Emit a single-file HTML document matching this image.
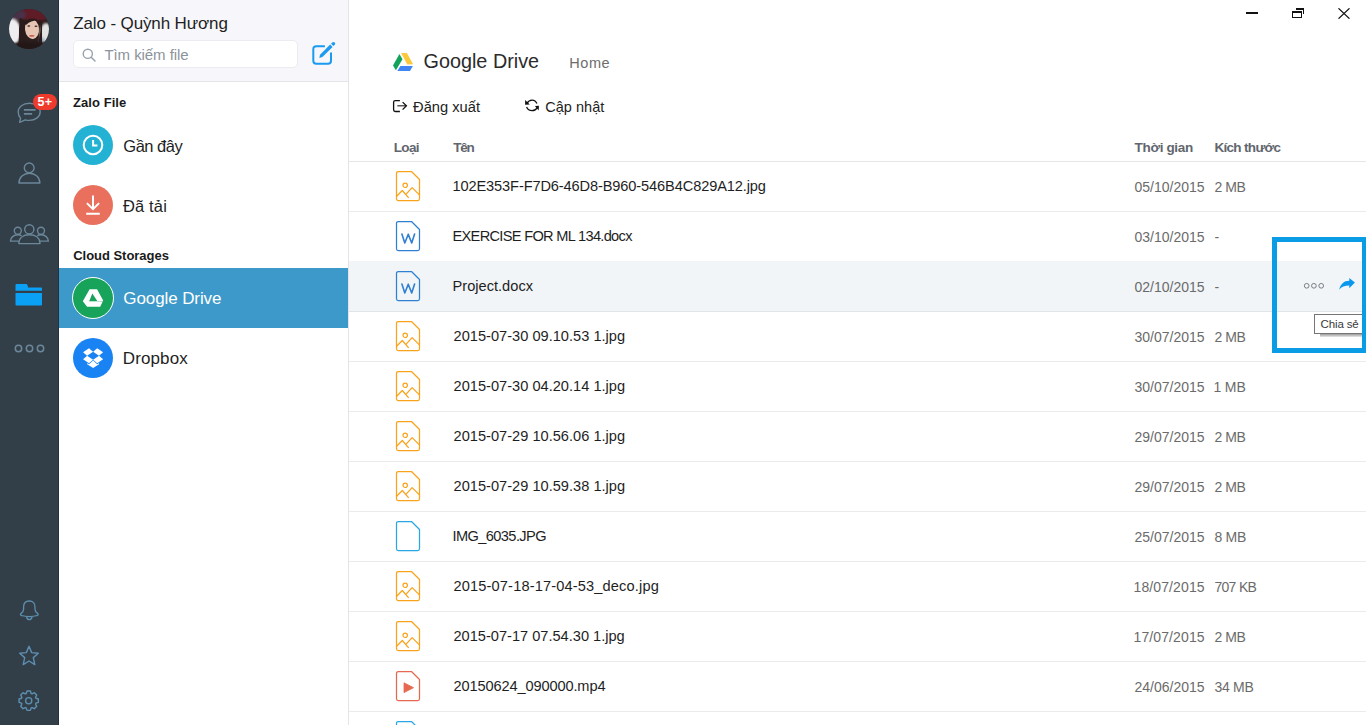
<!DOCTYPE html>
<html><head><meta charset="utf-8">
<style>
*{margin:0;padding:0;box-sizing:border-box}
html,body{width:1366px;height:725px;overflow:hidden;background:#fff}
body{position:relative;font-family:"Liberation Sans",sans-serif;color:#1e1e1e}
.a{position:absolute}
.t{position:absolute;white-space:nowrap;line-height:1}
svg{display:block}
</style></head>
<body>

<div class="a" style="left:0;top:0;width:59px;height:725px;background:#323f48"></div>
<div class="a" style="left:58px;top:0;width:1px;height:725px;background:#23313b"></div>
<svg class="a" style="left:9px;top:9px" width="40" height="40" viewBox="0 0 40 40">
<defs><clipPath id="avc"><circle cx="20" cy="20" r="20"/></clipPath>
<filter id="avb" x="-20%" y="-20%" width="140%" height="140%"><feGaussianBlur stdDeviation="1.1"/></filter>
<filter id="avb2" x="-20%" y="-20%" width="140%" height="140%"><feGaussianBlur stdDeviation="0.6"/></filter></defs>
<g clip-path="url(#avc)">
<rect x="0" y="0" width="40" height="40" fill="#2b1d1d"/>
<g filter="url(#avb)">
<ellipse cx="26" cy="3" rx="20" ry="9" fill="#5e1f26"/>
<ellipse cx="8" cy="6" rx="9" ry="5" fill="#4a3148"/>
<ellipse cx="3" cy="23" rx="9" ry="13" fill="#eeedf0"/>
<ellipse cx="37" cy="24" rx="6" ry="10" fill="#e2e3e0"/>
<ellipse cx="33" cy="31" rx="2.5" ry="2.5" fill="#9ab0c6"/>
</g>
<g filter="url(#avb2)">
<path d="M11 9 C14 10 17 14 17 22 C17 28 16 34 14 40 L9 40 C10 32 10 26 10 20 Z" fill="#2a1b1a"/>
<ellipse cx="23" cy="20" rx="7" ry="10" fill="#e7c5b4" transform="rotate(-6 23 20)"/>
<path d="M15 14 C18 9 25 8 31 12 C28 11 22 11 17 16 Z" fill="#2a1b1a"/>
<ellipse cx="19.8" cy="17" rx="1.5" ry="0.7" fill="#3a2624"/>
<ellipse cx="27" cy="17.3" rx="1.5" ry="0.7" fill="#3a2624"/>
<ellipse cx="22.8" cy="26.8" rx="2.8" ry="0.9" fill="#c2574f"/>
<path d="M30 11 C32 15 32 22 30 30 L30 40 L33 40 L33 12 Z" fill="#2e1f1e"/>
</g>
<rect x="0" y="34" width="40" height="6" fill="#231716" opacity="0.85" filter="url(#avb)"/>
</g>
</svg>
<svg class="a" style="left:16px;top:101px" width="28" height="24" viewBox="0 0 28 24">
<path d="M13.4 2.2 C19.6 2.2 24.2 6 24.2 10.8 C24.2 15.6 19.6 19.4 13.4 19.4 C11.9 19.4 10.5 19.2 9.3 18.8 L3.6 21.3 L4.6 17.2 C2.9 15.6 2.2 13.4 2.2 10.8 C2.2 6 7 2.2 13.4 2.2 Z" fill="none" stroke="#6b8799" stroke-width="1.4" stroke-linejoin="round"/>
<path d="M7.9 8.9 H19.6 M7.9 12.9 H16.1" stroke="#6b8799" stroke-width="1.9"/>
</svg>
<div class="a" style="left:33px;top:94px;width:24px;height:16px;border-radius:8px;background:#ef3b2d;color:#fff;font-size:12.5px;font-weight:700;line-height:17px;text-align:center;letter-spacing:0.3px">5+</div>
<svg class="a" style="left:16px;top:161px" width="28" height="26" viewBox="0 0 28 26">
<circle cx="13.2" cy="6.9" r="4.9" fill="none" stroke="#6b8799" stroke-width="1.4"/>
<path d="M2.9 22 C2.9 16.3 7.6 12.2 13.4 12.2 C19.2 12.2 23.9 16.3 23.9 22 Z" fill="none" stroke="#6b8799" stroke-width="1.4" stroke-linejoin="round"/>
</svg>
<svg class="a" style="left:8px;top:222px" width="44" height="25" viewBox="0 0 44 25">
<circle cx="9.8" cy="8.8" r="3.5" fill="none" stroke="#6b8799" stroke-width="1.4"/>
<circle cx="33" cy="8.8" r="3.5" fill="none" stroke="#6b8799" stroke-width="1.4"/>
<circle cx="21.3" cy="7.3" r="4.6" fill="none" stroke="#6b8799" stroke-width="1.4"/>
<path d="M13.6 13.6 C12.5 13 11.2 12.8 9.8 12.8 C5.6 12.8 2.5 15.5 2.5 19.1 H10.8" fill="none" stroke="#6b8799" stroke-width="1.4"/>
<path d="M29.2 13.6 C30.3 13 31.6 12.8 33 12.8 C37.2 12.8 40.3 15.5 40.3 19.1 H32" fill="none" stroke="#6b8799" stroke-width="1.4"/>
<path d="M10.8 21.6 C10.8 16 15.2 12.8 21.4 12.8 C27.6 12.8 32 16 32 21.6 Z" fill="none" stroke="#6b8799" stroke-width="1.4" stroke-linejoin="round"/>
</svg>
<svg class="a" style="left:15px;top:283px" width="28" height="24" viewBox="0 0 28 24">
<path d="M0.5 2.3 C0.5 1.6 1 1.1 1.7 1.1 H11.8 L13 3.6 V4.4 H25.8 C26.5 4.4 27 4.9 27 5.6 V7.7 H0.5 Z" fill="#0aa0f5"/>
<path d="M0.5 9.9 H27 V21.4 C27 22.1 26.5 22.6 25.8 22.6 H1.7 C1 22.6 0.5 22.1 0.5 21.4 Z" fill="#0aa0f5"/>
</svg>
<svg class="a" style="left:12px;top:342px" width="36" height="12" viewBox="0 0 36 12">
<circle cx="6.5" cy="6.5" r="3.2" fill="none" stroke="#6b8799" stroke-width="1.5"/>
<circle cx="17.5" cy="6.5" r="3.2" fill="none" stroke="#6b8799" stroke-width="1.5"/>
<circle cx="28.5" cy="6.5" r="3.2" fill="none" stroke="#6b8799" stroke-width="1.5"/>
</svg>
<svg class="a" style="left:18px;top:599px" width="24" height="24" viewBox="0 0 24 24">
<path d="M11.3 2 C7.6 2 5.6 4.5 5.6 8 V10.3 C5.6 12.3 4.6 13.4 3.1 14.4 C2 15.2 2.3 16.2 3.5 16.5 C6 17.3 8.5 17.6 11.3 17.6 C14.1 17.6 16.6 17.3 19.1 16.5 C20.3 16.2 20.6 15.2 19.5 14.4 C18 13.4 17 12.3 17 10.3 V8 C17 4.5 15 2 11.3 2 Z" fill="none" stroke="#5d8fb0" stroke-width="1.3" stroke-linejoin="round"/>
<path d="M8.5 18 C8.9 19.7 9.9 20.6 11.3 20.6 C12.7 20.6 13.7 19.7 14.1 18" fill="none" stroke="#5d8fb0" stroke-width="1.3"/>
</svg>
<svg class="a" style="left:17px;top:644px" width="24" height="24" viewBox="0 0 24 24">
<path d="M12 2.3 L14.7 8.6 L21.3 9.2 L16.3 13.6 L17.8 20.6 L12 17 L6.2 20.6 L7.7 13.6 L2.7 9.2 L9.3 8.6 Z" fill="none" stroke="#5d8fb0" stroke-width="1.4" stroke-linejoin="round"/>
</svg>
<svg class="a" style="left:17px;top:688px" width="24" height="24" viewBox="0 0 24 24">
<path d="M9.24 5.51 L10.04 3.04 L13.36 3.04 L14.16 5.51 L15.04 5.87 L17.36 4.70 L19.70 7.04 L18.53 9.36 L18.89 10.24 L21.36 11.04 L21.36 14.36 L18.89 15.16 L18.53 16.04 L19.70 18.36 L17.36 20.70 L15.04 19.53 L14.16 19.89 L13.36 22.36 L10.04 22.36 L9.24 19.89 L8.36 19.53 L6.04 20.70 L3.70 18.36 L4.87 16.04 L4.51 15.16 L2.04 14.36 L2.04 11.04 L4.51 10.24 L4.87 9.36 L3.70 7.04 L6.04 4.70 L8.36 5.87 Z" fill="none" stroke="#5d8fb0" stroke-width="1.4" stroke-linejoin="round"/>
<circle cx="11.7" cy="12.7" r="3.1" fill="none" stroke="#5d8fb0" stroke-width="1.3"/>
</svg>
<div class="a" style="left:59px;top:0;width:289px;height:81px;background:#f7f7fb"></div>
<div class="a" style="left:59px;top:81px;width:289px;height:1px;background:#e3e3e8"></div>
<div class="a" style="left:348px;top:0;width:1px;height:725px;background:#e5e3ea"></div>
<div class="t" style="left:73.20px;top:14.55px;font-size:17px;font-weight:400;color:#1f1f1f;letter-spacing:-0.120px;">Zalo - Quỳnh Hương</div>
<div class="a" style="left:73px;top:40px;width:225px;height:28px;background:#fff;border:1px solid #ececf0;border-radius:5px"></div>
<svg class="a" style="left:82px;top:48px" width="14" height="14" viewBox="0 0 14 14">
<circle cx="5.8" cy="5.8" r="4.6" fill="none" stroke="#9aa3ad" stroke-width="1.4"/>
<path d="M9.2 9.2 L13 13" stroke="#9aa3ad" stroke-width="1.5" stroke-linecap="round"/>
</svg>
<div class="t" style="left:104.40px;top:47.25px;font-size:15px;font-weight:400;color:#8b939c;letter-spacing:-0.064px;">Tìm kiếm file</div>
<svg class="a" style="left:310px;top:41px" width="26" height="26" viewBox="0 0 26 26">
<path d="M14.9 5.2 H6.3 C4.3 5.2 3.3 6.2 3.3 8.2 V19.7 C3.3 21.7 4.3 22.7 6.3 22.7 H18 C20 22.7 21 21.7 21 19.7 V11.4" fill="none" stroke="#1a9af0" stroke-width="2"/>
<path d="M9.4 16.9 L10 13.7 L20.2 3.5 L22.6 5.9 L12.4 16.1 Z" fill="#1a9af0"/>
<path d="M21 2.7 L22.3 1.4 C23 0.7 24 0.7 24.7 1.4 C25.4 2.1 25.4 3.1 24.7 3.8 L23.4 5.1 Z" fill="#1a9af0"/>
</svg>
<div class="t" style="left:73.10px;top:95.55px;font-size:13px;font-weight:700;color:#1a1a1a;letter-spacing:0.050px;">Zalo File</div>
<div class="a" style="left:73px;top:125px;width:40px;height:40px;border-radius:50%;background:#24b2d4"></div>
<svg class="a" style="left:73px;top:125px" width="40" height="40" viewBox="0 0 40 40">
<circle cx="20" cy="20" r="9.3" fill="none" stroke="#fff" stroke-width="2"/>
<path d="M20.1 14.9 V20.5 H24.4" fill="none" stroke="#fff" stroke-width="2"/>
</svg>
<div class="t" style="left:123.30px;top:137.57px;font-size:16.5px;font-weight:400;color:#1f1f1f;letter-spacing:-0.487px;">Gần đây</div>
<div class="a" style="left:73px;top:185px;width:40px;height:40px;border-radius:50%;background:#e8705c"></div>
<svg class="a" style="left:73px;top:185px" width="40" height="40" viewBox="0 0 40 40">
<path d="M20 10.5 V23.6 M13.9 18.1 L20 24.2 L26.1 18.1 M13.2 28.8 H26.8" fill="none" stroke="#fff" stroke-width="2"/>
</svg>
<div class="t" style="left:122.90px;top:197.97px;font-size:16.5px;font-weight:400;color:#1f1f1f;letter-spacing:0.173px;">Đã tải</div>
<div class="t" style="left:73.20px;top:248.95px;font-size:13px;font-weight:700;color:#1a1a1a;letter-spacing:-0.026px;">Cloud Storages</div>
<div class="a" style="left:59px;top:268px;width:289px;height:60px;background:#3d99c9"></div>
<div class="a" style="left:72px;top:277px;width:42px;height:42px;border-radius:50%;background:#17a35a;border:1.5px solid #fff"></div>
<svg class="a" style="left:72px;top:277px" width="42" height="42" viewBox="0 0 42 42">
<path d="M17.6 12.15 H25.06 L31.19 23.57 L28.2 29.7 H15.12 L10.82 24.24 Z M20.3 16.6 L17.3 24 H25.3 Z" fill="#fff" fill-rule="evenodd"/>
<path d="M17.3 24.35 H31" stroke="#17a35a" stroke-width="0.6" opacity="0.6"/>
</svg>
<div class="t" style="left:123.30px;top:290.25px;font-size:17px;font-weight:400;color:#fff;letter-spacing:-0.096px;">Google Drive</div>
<div class="a" style="left:73px;top:338px;width:40px;height:40px;border-radius:50%;background:#1983f3"></div>
<svg class="a" style="left:73px;top:338px" width="40" height="40" viewBox="0 0 40 40">
<g transform="translate(10.05 10) scale(0.47 0.5)" fill="#fff">
<path d="M12.6 0.5 L0 8.6 L8.7 15.6 L21.4 7.7 Z"/>
<path d="M21.4 7.7 L30.1 0.5 L42.7 8.6 L34 15.6 Z"/>
<path d="M0 22.5 L12.6 30.6 L21.4 23.4 L8.7 15.6 Z"/>
<path d="M21.4 23.4 L30.1 30.6 L42.7 22.5 L34 15.6 Z"/>
<path d="M21.4 25.1 L12.6 32.3 L8.8 29.8 V32.6 L21.4 40.2 L34 32.6 V29.8 L30.1 32.3 Z"/>
</g>
</svg>
<div class="t" style="left:122.80px;top:350.45px;font-size:17px;font-weight:400;color:#1f1f1f;letter-spacing:0.107px;">Dropbox</div>
<div class="a" style="left:1246px;top:12px;width:12px;height:2px;background:#111"></div>
<div class="a" style="left:1292px;top:11px;width:10px;height:7px;border:1px solid #111;border-top-width:2px"></div>
<div class="a" style="left:1296px;top:8px;width:8px;height:2px;background:#111"></div>
<div class="a" style="left:1303px;top:8px;width:1px;height:6px;background:#111"></div>
<svg class="a" style="left:1338px;top:8px" width="12" height="11" viewBox="0 0 12 11">
<path d="M0.5 0.3 L11.5 10.7 M11.5 0.3 L0.5 10.7" stroke="#111" stroke-width="1.2"/>
</svg>
<svg class="a" style="left:392px;top:52px" width="22" height="20" viewBox="0 0 22 20">
<path d="M9.1 1 H14.9 L21.1 12.2 L15.3 12.4 Z" fill="#fcc93a"/>
<path d="M7.4 2 L10.5 7.2 L3.9 18.2 L1 13.4 Z" fill="#12a35a"/>
<path d="M8.4 14 H20.9 L18 19 H5.3 Z" fill="#3f86f4"/>
</svg>
<div class="t" style="left:423.50px;top:52.17px;font-size:19.8px;font-weight:400;color:#2b2b2b;letter-spacing:0.014px;">Google Drive</div>
<div class="t" style="left:569.30px;top:55.77px;font-size:14.5px;font-weight:400;color:#6d6d6d;letter-spacing:0.529px;">Home</div>
<svg class="a" style="left:392px;top:99px" width="16" height="14" viewBox="0 0 16 14">
<path d="M7.9 1.6 H3.3 C2.3 1.6 1.6 2.3 1.6 3.3 V10.8 C1.6 11.8 2.3 12.5 3.3 12.5 H7.9" fill="none" stroke="#111" stroke-width="1.3"/>
<path d="M5.3 6.8 H14.2" fill="none" stroke="#333" stroke-width="1.2"/>
<path d="M10.6 3.1 L14.4 6.8 L10.6 10.6" fill="none" stroke="#111" stroke-width="1.3"/>
</svg>
<div class="t" style="left:413.10px;top:99.50px;font-size:14.7px;font-weight:400;color:#222;letter-spacing:-0.009px;">Đăng xuất</div>
<svg class="a" style="left:524px;top:98px" width="16" height="15" viewBox="0 0 16 15">
<path d="M12.9 5.6 C12 3.4 10.2 2.1 8.1 2.1 C5.8 2.1 4 3.4 2.9 5.3" fill="none" stroke="#111" stroke-width="1.3"/>
<path d="M1.1 1.9 L1.1 6.8 L5.8 6.5 Z" fill="#111"/>
<path d="M2.6 8.9 C3.5 11.2 5.5 12.6 8.1 12.6 C10.4 12.6 12.4 11.2 13.5 9.3" fill="none" stroke="#111" stroke-width="1.3"/>
<path d="M10.9 8.1 L14.9 7.8 L14.7 12.5 Z" fill="#111"/>
</svg>
<div class="t" style="left:545.20px;top:99.67px;font-size:14.5px;font-weight:400;color:#222;letter-spacing:0.040px;">Cập nhật</div>
<div class="t" style="left:393.70px;top:140.53px;font-size:13.5px;font-weight:700;color:#62666e;letter-spacing:-0.634px;">Loại</div>
<div class="t" style="left:453.30px;top:140.53px;font-size:13.5px;font-weight:700;color:#62666e;letter-spacing:-1.327px;">Tên</div>
<div class="t" style="left:1134.60px;top:140.53px;font-size:13.5px;font-weight:700;color:#62666e;letter-spacing:-0.350px;">Thời gian</div>
<div class="t" style="left:1214.40px;top:140.53px;font-size:13.5px;font-weight:700;color:#62666e;letter-spacing:-0.680px;">Kích thước</div>
<div class="a" style="left:349px;top:161px;width:1017px;height:1px;background:#e6e6e6"></div>
<div class="a" style="left:349px;top:211px;width:1017px;height:1px;background:#ebebeb"></div>
<div class="a" style="left:395px;top:170px;width:26px;height:32px"><svg class="a" style="left:0;top:0" width="26" height="32" viewBox="0 0 26 32"><path d="M3.3 1.5 H16.5 L24.5 9.5 V28.7 A1.8 1.8 0 0 1 22.7 30.5 H3.3 A1.8 1.8 0 0 1 1.5 28.7 V3.3 A1.8 1.8 0 0 1 3.3 1.5 Z" fill="none" stroke="#f9a21b" stroke-width="1.25" stroke-linejoin="round"/><circle cx="10.2" cy="15.3" r="2.2" fill="none" stroke="#f9a21b" stroke-width="1.2"/><path d="M1.6 26.3 L7.3 20.5 L13.7 27.8 M10.9 24.3 L17.1 17.6 L24.4 24.9" fill="none" stroke="#f9a21b" stroke-width="1.25" stroke-linejoin="round"/></svg></div>
<div class="t" style="left:452.50px;top:179.29px;font-size:14.6px;font-weight:400;color:#1e1e1e;letter-spacing:-0.118px;">102E353F-F7D6-46D8-B960-546B4C829A12.jpg</div>
<div class="t" style="left:1134.50px;top:179.70px;font-size:14px;font-weight:400;color:#6b6b6b;letter-spacing:0.002px;">05/10/2015</div>
<div class="t" style="left:1214.40px;top:179.70px;font-size:14px;font-weight:400;color:#6b6b6b;letter-spacing:-0.446px;">2 MB</div>
<div class="a" style="left:395px;top:220px;width:26px;height:32px"><svg class="a" style="left:0;top:0" width="26" height="32" viewBox="0 0 26 32"><path d="M3.3 1.5 H16.5 L24.5 9.5 V28.7 A1.8 1.8 0 0 1 22.7 30.5 H3.3 A1.8 1.8 0 0 1 1.5 28.7 V3.3 A1.8 1.8 0 0 1 3.3 1.5 Z" fill="none" stroke="#2f80d1" stroke-width="1.25" stroke-linejoin="round"/><path d="M6.9 14 L9.8 23 L13.25 14.2 L16.7 23 L19.6 14" fill="none" stroke="#2f80d1" stroke-width="1.6" stroke-linejoin="round" stroke-linecap="round"/></svg></div>
<div class="t" style="left:452.50px;top:229.29px;font-size:14.6px;font-weight:400;color:#1e1e1e;letter-spacing:-0.686px;">EXERCISE FOR ML 134.docx</div>
<div class="t" style="left:1134.50px;top:229.70px;font-size:14px;font-weight:400;color:#6b6b6b;letter-spacing:0.002px;">03/10/2015</div>
<div class="t" style="left:1214.40px;top:229.70px;font-size:14px;font-weight:400;color:#6b6b6b;letter-spacing:0.000px;">-</div>
<div class="a" style="left:349px;top:261px;width:1017px;height:50px;background:#f1f5f8"></div>
<div class="a" style="left:349px;top:311px;width:1017px;height:1px;background:#e1e4e8"></div>
<div class="a" style="left:395px;top:270px;width:26px;height:32px"><svg class="a" style="left:0;top:0" width="26" height="32" viewBox="0 0 26 32"><path d="M3.3 1.5 H16.5 L24.5 9.5 V28.7 A1.8 1.8 0 0 1 22.7 30.5 H3.3 A1.8 1.8 0 0 1 1.5 28.7 V3.3 A1.8 1.8 0 0 1 3.3 1.5 Z" fill="none" stroke="#2f80d1" stroke-width="1.25" stroke-linejoin="round"/><path d="M6.9 14 L9.8 23 L13.25 14.2 L16.7 23 L19.6 14" fill="none" stroke="#2f80d1" stroke-width="1.6" stroke-linejoin="round" stroke-linecap="round"/></svg></div>
<div class="t" style="left:452.50px;top:279.29px;font-size:14.6px;font-weight:400;color:#1e1e1e;letter-spacing:0.018px;">Project.docx</div>
<div class="t" style="left:1134.50px;top:279.70px;font-size:14px;font-weight:400;color:#6b6b6b;letter-spacing:0.002px;">02/10/2015</div>
<div class="t" style="left:1214.40px;top:279.70px;font-size:14px;font-weight:400;color:#6b6b6b;letter-spacing:0.000px;">-</div>
<div class="a" style="left:349px;top:361px;width:1017px;height:1px;background:#ebebeb"></div>
<div class="a" style="left:395px;top:320px;width:26px;height:32px"><svg class="a" style="left:0;top:0" width="26" height="32" viewBox="0 0 26 32"><path d="M3.3 1.5 H16.5 L24.5 9.5 V28.7 A1.8 1.8 0 0 1 22.7 30.5 H3.3 A1.8 1.8 0 0 1 1.5 28.7 V3.3 A1.8 1.8 0 0 1 3.3 1.5 Z" fill="none" stroke="#f9a21b" stroke-width="1.25" stroke-linejoin="round"/><circle cx="10.2" cy="15.3" r="2.2" fill="none" stroke="#f9a21b" stroke-width="1.2"/><path d="M1.6 26.3 L7.3 20.5 L13.7 27.8 M10.9 24.3 L17.1 17.6 L24.4 24.9" fill="none" stroke="#f9a21b" stroke-width="1.25" stroke-linejoin="round"/></svg></div>
<div class="t" style="left:453.50px;top:329.29px;font-size:14.6px;font-weight:400;color:#1e1e1e;letter-spacing:0.017px;">2015-07-30 09.10.53 1.jpg</div>
<div class="t" style="left:1134.50px;top:329.70px;font-size:14px;font-weight:400;color:#6b6b6b;letter-spacing:0.002px;">30/07/2015</div>
<div class="t" style="left:1214.40px;top:329.70px;font-size:14px;font-weight:400;color:#6b6b6b;letter-spacing:-0.446px;">2 MB</div>
<div class="a" style="left:349px;top:411px;width:1017px;height:1px;background:#ebebeb"></div>
<div class="a" style="left:395px;top:370px;width:26px;height:32px"><svg class="a" style="left:0;top:0" width="26" height="32" viewBox="0 0 26 32"><path d="M3.3 1.5 H16.5 L24.5 9.5 V28.7 A1.8 1.8 0 0 1 22.7 30.5 H3.3 A1.8 1.8 0 0 1 1.5 28.7 V3.3 A1.8 1.8 0 0 1 3.3 1.5 Z" fill="none" stroke="#f9a21b" stroke-width="1.25" stroke-linejoin="round"/><circle cx="10.2" cy="15.3" r="2.2" fill="none" stroke="#f9a21b" stroke-width="1.2"/><path d="M1.6 26.3 L7.3 20.5 L13.7 27.8 M10.9 24.3 L17.1 17.6 L24.4 24.9" fill="none" stroke="#f9a21b" stroke-width="1.25" stroke-linejoin="round"/></svg></div>
<div class="t" style="left:453.50px;top:379.29px;font-size:14.6px;font-weight:400;color:#1e1e1e;letter-spacing:0.017px;">2015-07-30 04.20.14 1.jpg</div>
<div class="t" style="left:1134.50px;top:379.70px;font-size:14px;font-weight:400;color:#6b6b6b;letter-spacing:0.002px;">30/07/2015</div>
<div class="t" style="left:1213.40px;top:379.70px;font-size:14px;font-weight:400;color:#6b6b6b;letter-spacing:-0.113px;">1 MB</div>
<div class="a" style="left:349px;top:461px;width:1017px;height:1px;background:#ebebeb"></div>
<div class="a" style="left:395px;top:420px;width:26px;height:32px"><svg class="a" style="left:0;top:0" width="26" height="32" viewBox="0 0 26 32"><path d="M3.3 1.5 H16.5 L24.5 9.5 V28.7 A1.8 1.8 0 0 1 22.7 30.5 H3.3 A1.8 1.8 0 0 1 1.5 28.7 V3.3 A1.8 1.8 0 0 1 3.3 1.5 Z" fill="none" stroke="#f9a21b" stroke-width="1.25" stroke-linejoin="round"/><circle cx="10.2" cy="15.3" r="2.2" fill="none" stroke="#f9a21b" stroke-width="1.2"/><path d="M1.6 26.3 L7.3 20.5 L13.7 27.8 M10.9 24.3 L17.1 17.6 L24.4 24.9" fill="none" stroke="#f9a21b" stroke-width="1.25" stroke-linejoin="round"/></svg></div>
<div class="t" style="left:453.50px;top:429.29px;font-size:14.6px;font-weight:400;color:#1e1e1e;letter-spacing:0.017px;">2015-07-29 10.56.06 1.jpg</div>
<div class="t" style="left:1134.50px;top:429.70px;font-size:14px;font-weight:400;color:#6b6b6b;letter-spacing:0.002px;">29/07/2015</div>
<div class="t" style="left:1214.40px;top:429.70px;font-size:14px;font-weight:400;color:#6b6b6b;letter-spacing:-0.446px;">2 MB</div>
<div class="a" style="left:349px;top:511px;width:1017px;height:1px;background:#ebebeb"></div>
<div class="a" style="left:395px;top:470px;width:26px;height:32px"><svg class="a" style="left:0;top:0" width="26" height="32" viewBox="0 0 26 32"><path d="M3.3 1.5 H16.5 L24.5 9.5 V28.7 A1.8 1.8 0 0 1 22.7 30.5 H3.3 A1.8 1.8 0 0 1 1.5 28.7 V3.3 A1.8 1.8 0 0 1 3.3 1.5 Z" fill="none" stroke="#f9a21b" stroke-width="1.25" stroke-linejoin="round"/><circle cx="10.2" cy="15.3" r="2.2" fill="none" stroke="#f9a21b" stroke-width="1.2"/><path d="M1.6 26.3 L7.3 20.5 L13.7 27.8 M10.9 24.3 L17.1 17.6 L24.4 24.9" fill="none" stroke="#f9a21b" stroke-width="1.25" stroke-linejoin="round"/></svg></div>
<div class="t" style="left:453.50px;top:479.29px;font-size:14.6px;font-weight:400;color:#1e1e1e;letter-spacing:0.017px;">2015-07-29 10.59.38 1.jpg</div>
<div class="t" style="left:1134.50px;top:479.70px;font-size:14px;font-weight:400;color:#6b6b6b;letter-spacing:0.002px;">29/07/2015</div>
<div class="t" style="left:1214.40px;top:479.70px;font-size:14px;font-weight:400;color:#6b6b6b;letter-spacing:-0.446px;">2 MB</div>
<div class="a" style="left:349px;top:561px;width:1017px;height:1px;background:#ebebeb"></div>
<div class="a" style="left:395px;top:520px;width:26px;height:32px"><svg class="a" style="left:0;top:0" width="26" height="32" viewBox="0 0 26 32"><path d="M3.3 1.5 H16.5 L24.5 9.5 V28.7 A1.8 1.8 0 0 1 22.7 30.5 H3.3 A1.8 1.8 0 0 1 1.5 28.7 V3.3 A1.8 1.8 0 0 1 3.3 1.5 Z" fill="none" stroke="#2aa7e2" stroke-width="1.25" stroke-linejoin="round"/></svg></div>
<div class="t" style="left:452.50px;top:529.29px;font-size:14.6px;font-weight:400;color:#1e1e1e;letter-spacing:-0.594px;">IMG_6035.JPG</div>
<div class="t" style="left:1134.50px;top:529.70px;font-size:14px;font-weight:400;color:#6b6b6b;letter-spacing:0.002px;">25/07/2015</div>
<div class="t" style="left:1214.40px;top:529.70px;font-size:14px;font-weight:400;color:#6b6b6b;letter-spacing:-0.246px;">8 MB</div>
<div class="a" style="left:349px;top:611px;width:1017px;height:1px;background:#ebebeb"></div>
<div class="a" style="left:395px;top:570px;width:26px;height:32px"><svg class="a" style="left:0;top:0" width="26" height="32" viewBox="0 0 26 32"><path d="M3.3 1.5 H16.5 L24.5 9.5 V28.7 A1.8 1.8 0 0 1 22.7 30.5 H3.3 A1.8 1.8 0 0 1 1.5 28.7 V3.3 A1.8 1.8 0 0 1 3.3 1.5 Z" fill="none" stroke="#f9a21b" stroke-width="1.25" stroke-linejoin="round"/><circle cx="10.2" cy="15.3" r="2.2" fill="none" stroke="#f9a21b" stroke-width="1.2"/><path d="M1.6 26.3 L7.3 20.5 L13.7 27.8 M10.9 24.3 L17.1 17.6 L24.4 24.9" fill="none" stroke="#f9a21b" stroke-width="1.25" stroke-linejoin="round"/></svg></div>
<div class="t" style="left:453.50px;top:579.29px;font-size:14.6px;font-weight:400;color:#1e1e1e;letter-spacing:0.152px;">2015-07-18-17-04-53_deco.jpg</div>
<div class="t" style="left:1133.50px;top:579.70px;font-size:14px;font-weight:400;color:#6b6b6b;letter-spacing:0.113px;">18/07/2015</div>
<div class="t" style="left:1214.40px;top:579.70px;font-size:14px;font-weight:400;color:#6b6b6b;letter-spacing:-0.677px;">707 KB</div>
<div class="a" style="left:349px;top:661px;width:1017px;height:1px;background:#ebebeb"></div>
<div class="a" style="left:395px;top:620px;width:26px;height:32px"><svg class="a" style="left:0;top:0" width="26" height="32" viewBox="0 0 26 32"><path d="M3.3 1.5 H16.5 L24.5 9.5 V28.7 A1.8 1.8 0 0 1 22.7 30.5 H3.3 A1.8 1.8 0 0 1 1.5 28.7 V3.3 A1.8 1.8 0 0 1 3.3 1.5 Z" fill="none" stroke="#f9a21b" stroke-width="1.25" stroke-linejoin="round"/><circle cx="10.2" cy="15.3" r="2.2" fill="none" stroke="#f9a21b" stroke-width="1.2"/><path d="M1.6 26.3 L7.3 20.5 L13.7 27.8 M10.9 24.3 L17.1 17.6 L24.4 24.9" fill="none" stroke="#f9a21b" stroke-width="1.25" stroke-linejoin="round"/></svg></div>
<div class="t" style="left:453.50px;top:629.29px;font-size:14.6px;font-weight:400;color:#1e1e1e;letter-spacing:0.000px;">2015-07-17 07.54.30 1.jpg</div>
<div class="t" style="left:1133.50px;top:629.70px;font-size:14px;font-weight:400;color:#6b6b6b;letter-spacing:0.113px;">17/07/2015</div>
<div class="t" style="left:1214.40px;top:629.70px;font-size:14px;font-weight:400;color:#6b6b6b;letter-spacing:-0.446px;">2 MB</div>
<div class="a" style="left:349px;top:711px;width:1017px;height:1px;background:#ebebeb"></div>
<div class="a" style="left:395px;top:670px;width:26px;height:32px"><svg class="a" style="left:0;top:0" width="26" height="32" viewBox="0 0 26 32"><path d="M3.3 1.5 H16.5 L24.5 9.5 V28.7 A1.8 1.8 0 0 1 22.7 30.5 H3.3 A1.8 1.8 0 0 1 1.5 28.7 V3.3 A1.8 1.8 0 0 1 3.3 1.5 Z" fill="none" stroke="#e5694f" stroke-width="1.25" stroke-linejoin="round"/><path d="M9 12.8 L18.6 17.7 L9 22.6 Z" fill="#e5694f" stroke="#e5694f" stroke-width="0.8" stroke-linejoin="round"/></svg></div>
<div class="t" style="left:453.50px;top:679.29px;font-size:14.6px;font-weight:400;color:#1e1e1e;letter-spacing:-0.121px;">20150624_090000.mp4</div>
<div class="t" style="left:1134.50px;top:679.70px;font-size:14px;font-weight:400;color:#6b6b6b;letter-spacing:0.002px;">24/06/2015</div>
<div class="t" style="left:1214.40px;top:679.70px;font-size:14px;font-weight:400;color:#6b6b6b;letter-spacing:-0.281px;">34 MB</div>
<div class="a" style="left:349px;top:761px;width:1017px;height:1px;background:#ebebeb"></div>
<div class="a" style="left:395px;top:720px;width:26px;height:32px"><svg class="a" style="left:0;top:0" width="26" height="32" viewBox="0 0 26 32"><path d="M3.3 1.5 H16.5 L24.5 9.5 V28.7 A1.8 1.8 0 0 1 22.7 30.5 H3.3 A1.8 1.8 0 0 1 1.5 28.7 V3.3 A1.8 1.8 0 0 1 3.3 1.5 Z" fill="none" stroke="#2aa7e2" stroke-width="1.25" stroke-linejoin="round"/></svg></div>
<svg class="a" style="left:1302px;top:281px" width="24" height="10" viewBox="0 0 24 10">
<circle cx="4.7" cy="4.8" r="2.35" fill="none" stroke="#7c7c84" stroke-width="1"/>
<circle cx="11.9" cy="4.8" r="2.35" fill="none" stroke="#7c7c84" stroke-width="1"/>
<circle cx="19.2" cy="4.8" r="2.35" fill="none" stroke="#7c7c84" stroke-width="1"/>
</svg>
<svg class="a" style="left:1338px;top:276px" width="18" height="15" viewBox="0 0 18 15">
<path d="M1.2 13.8 C2.4 8 6 4.7 11.3 4.7 V1.9 L16.9 6.5 L11.3 12.2 V9.6 C6.5 9.6 3.5 11 1.2 13.8 Z" fill="#0a98ee"/>
</svg>
<div class="a" style="left:1320px;top:334px;width:46px;height:3px;background:linear-gradient(#9a9a9a,#e8e8e8)"></div>
<div class="a" style="left:1314px;top:314px;width:60px;height:20px;background:#fff;border:1px solid #767676"></div>
<div class="t" style="left:1320.60px;top:318.83px;font-size:11.5px;font-weight:400;color:#3a3a3a;letter-spacing:-0.149px;">Chia sẻ</div>
<div class="a" style="left:1272px;top:237px;width:95px;height:116px;border:5px solid #0a9de6"></div>
</body></html>
